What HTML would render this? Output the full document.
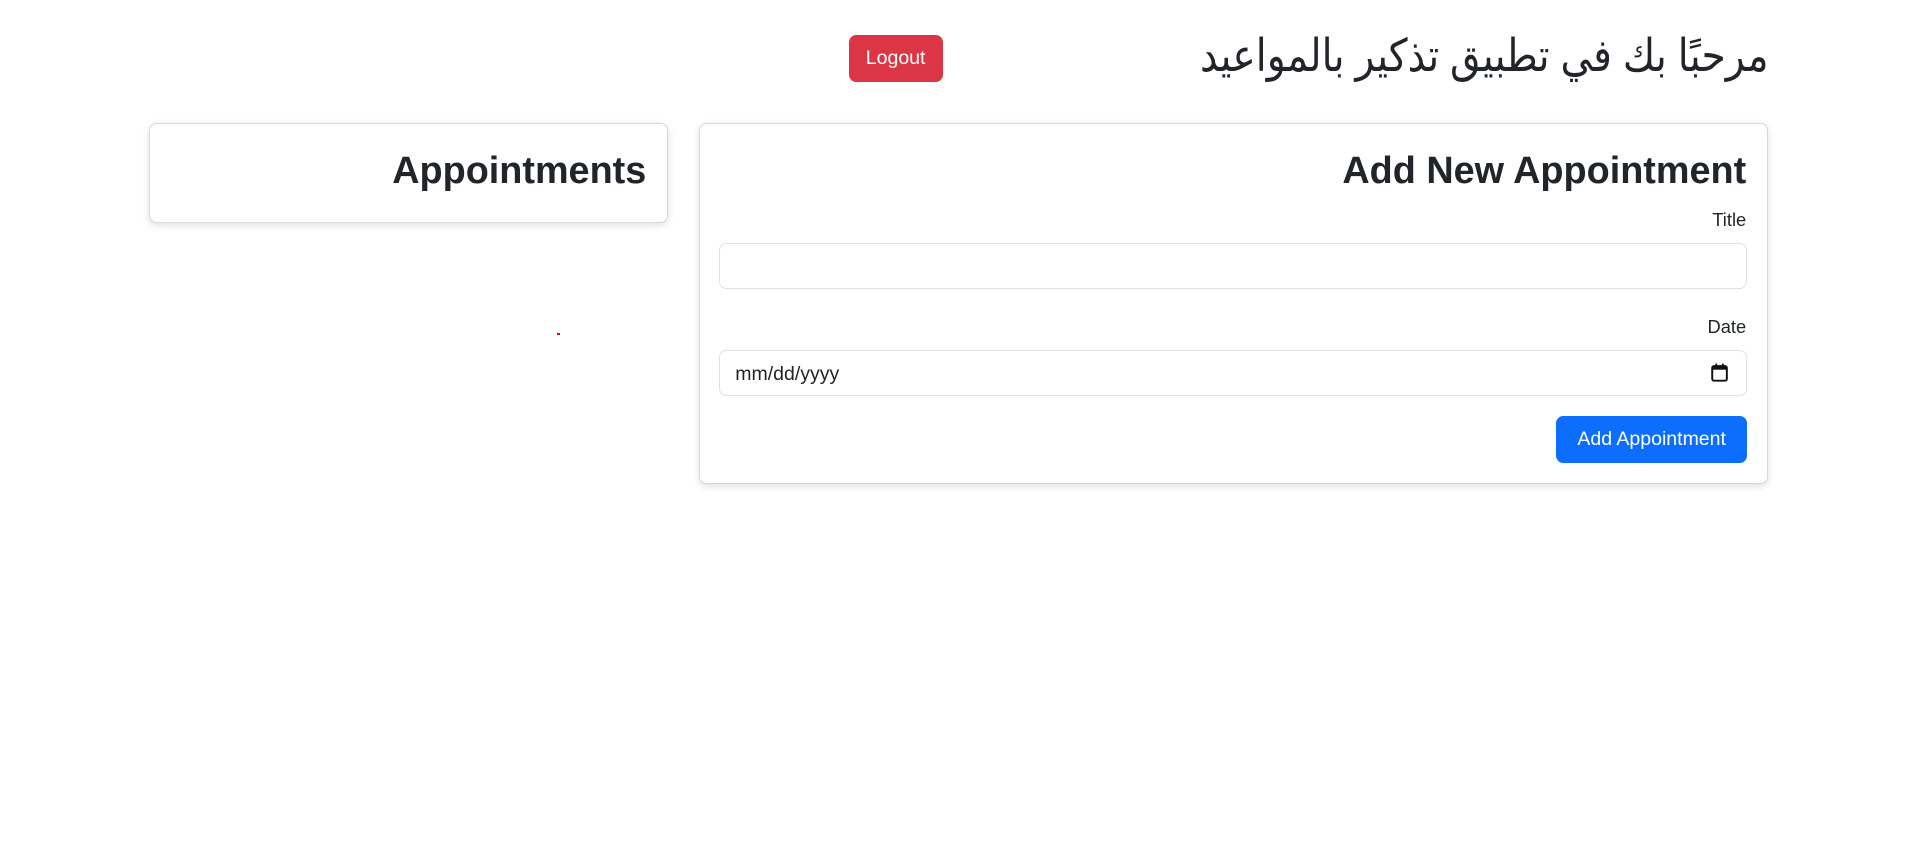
<!DOCTYPE html>
<html><head><meta charset="utf-8"><style>
html,body{margin:0;padding:0;background:#fff;}
body{width:1568px;height:694px;zoom:1.21939;position:relative;overflow:hidden;font-family:"Liberation Sans","DejaVu Sans",sans-serif;color:#212529;}
.abs{position:absolute;}
h1{position:absolute;right:118px;top:22px;margin:0;font-size:37px;font-weight:400;direction:rtl;line-height:48px;white-space:nowrap;transform:scaleX(0.87);transform-origin:right center;}
.logout{left:696px;top:29px;width:77px;height:38px;background:#dc3545;color:#fff;border-radius:6px;font-size:16px;line-height:38px;text-align:center;}
.card{border:1px solid #d6d9dc;border-radius:6px;box-shadow:0 2px 6px rgba(0,0,0,.12);background:#fff;box-sizing:border-box;}
.h2{font-size:31px;font-weight:700;white-space:nowrap;text-align:right;line-height:38px;}
.label{font-size:15px;text-align:right;}
.input{border:1px solid #dee2e6;border-radius:6px;box-sizing:border-box;background:#fff;}
.btn{background:#0d6efd;color:#fff;border-radius:6px;font-size:16px;text-align:center;line-height:39px;}
</style></head><body>
<h1>مرحبًا بك في تطبيق تذكير بالمواعيد</h1>
<div class="abs logout">Logout</div>
<div class="abs card" style="left:122px;top:101px;width:426px;height:82px;"></div>
<div class="abs h2" style="right:1038px;top:121px;">Appointments</div>
<div class="abs" style="left:457px;top:273px;width:2px;height:2px;background:#e00;"></div>
<div class="abs card" style="left:573px;top:101px;width:877px;height:296px;"></div>
<div class="abs h2" style="right:136px;top:121px;">Add New Appointment</div>
<div class="abs label" style="right:136px;top:171px;">Title</div>
<div class="abs input" style="left:590px;top:199px;width:843px;height:38px;"></div>
<div class="abs label" style="right:136px;top:259px;">Date</div>
<div class="abs input" style="left:590px;top:287px;width:843px;height:38px;"></div>
<div class="abs" style="left:603px;top:298px;font-size:16px;">mm/dd/yyyy</div>
<svg class="abs" style="left:1403px;top:298px" width="14" height="16" viewBox="0 0 14 16"><rect x="1" y="2.5" width="12" height="12" rx="1.5" fill="none" stroke="#111" stroke-width="1.6"/><rect x="1" y="2.5" width="12" height="3" fill="#111"/><rect x="3.5" y="0.5" width="1.5" height="3" fill="#111"/><rect x="9" y="0.5" width="1.5" height="3" fill="#111"/></svg>
<div class="abs btn" style="left:1276px;top:341px;width:157px;height:39px;">Add Appointment</div>
</body></html>
